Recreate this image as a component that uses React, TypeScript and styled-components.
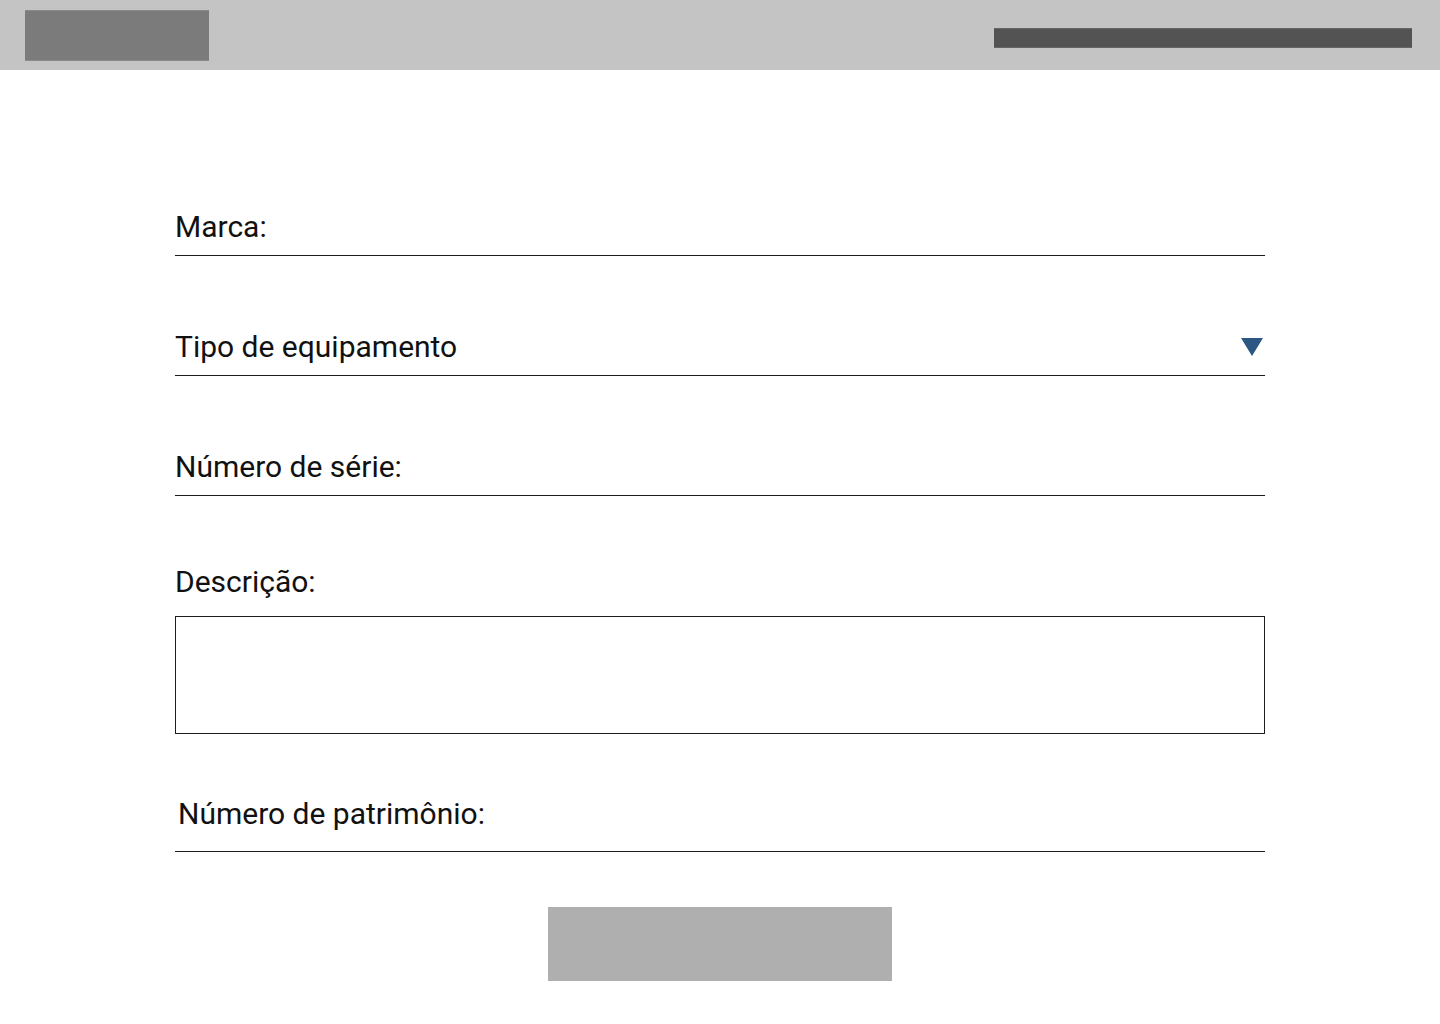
import React from "react";
import styled, { createGlobalStyle } from "styled-components";

const Global = createGlobalStyle`
  html, body { margin: 0; padding: 0; background: #ffffff; }
  body { font-family: Roboto, "Liberation Sans", Arial, sans-serif; color: #111; }
  * { box-sizing: border-box; }
`;

const Header = styled.header`
  height: 70px;
  background: #c4c4c4;
  display: flex;
  align-items: flex-start;
  justify-content: space-between;
  padding: 0 28px 0 25px;
`;

const Logo = styled.div`
  width: 184px;
  height: 51px;
  margin-top: 10px;
  background: #7b7b7b;
  border-top: 1px solid #8a8a8a;
  border-bottom: 1px solid #8a8a8a;
`;

const NavBar = styled.div`
  width: 418px;
  height: 20px;
  margin-top: 28px;
  background: #535353;
  border-top: 1px solid #666;
  border-bottom: 1px solid #666;
`;

const Form = styled.form`
  width: 1090px;
  margin: 0 auto;
  padding-top: 141px;
  display: flex;
  flex-direction: column;
`;

const Field = styled.div<{ $mt?: number; $pb?: number }>`
  margin-top: ${(p) => p.$mt ?? 0}px;
  padding-bottom: ${(p) => p.$pb ?? 13}px;
  border-bottom: 1px solid #1c1c1c;
  display: flex;
  align-items: center;
  justify-content: space-between;
`;

const Label = styled.label<{ $indent?: number }>`
  font-family: Roboto, "Liberation Sans", Arial, sans-serif;
  font-size: 30px;
  line-height: 31px;
  height: 31px;
  color: #111;
  padding-left: ${(p) => p.$indent ?? 0}px;
`;

const Caret = styled.svg`
  width: 22px;
  height: 18px;
  margin-right: 2px;
  margin-top: 1px;
  display: block;
`;

const AreaBlock = styled.div`
  margin-top: 70px;
  display: flex;
  flex-direction: column;
  gap: 19px;
`;

const TextArea = styled.div`
  height: 118px;
  border: 1px solid #1c1c1c;
`;

const ButtonRow = styled.div`
  display: flex;
  justify-content: center;
  margin-top: 55px;
`;

const SubmitButton = styled.button`
  width: 344px;
  height: 74px;
  border: none;
  background: #afafaf;
  padding: 0;
  cursor: pointer;
`;

export default function App() {
  return (
    <>
      <Global />
      <Header>
        <Logo />
        <NavBar />
      </Header>
      <Form onSubmit={(e) => e.preventDefault()}>
        <Field>
          <Label>Marca:</Label>
        </Field>
        <Field $mt={75}>
          <Label>Tipo de equipamento</Label>
          <Caret viewBox="0 0 22 18">
            <polygon points="0,0 22,0 11,18" fill="#2c5782" />
          </Caret>
        </Field>
        <Field $mt={75}>
          <Label>Número de série:</Label>
        </Field>
        <AreaBlock>
          <Label>Descrição:</Label>
          <TextArea />
        </AreaBlock>
        <Field $mt={64} $pb={22}>
          <Label $indent={3}>Número de patrimônio:</Label>
        </Field>
        <ButtonRow>
          <SubmitButton type="submit" aria-label="Salvar" />
        </ButtonRow>
      </Form>
    </>
  );
}
